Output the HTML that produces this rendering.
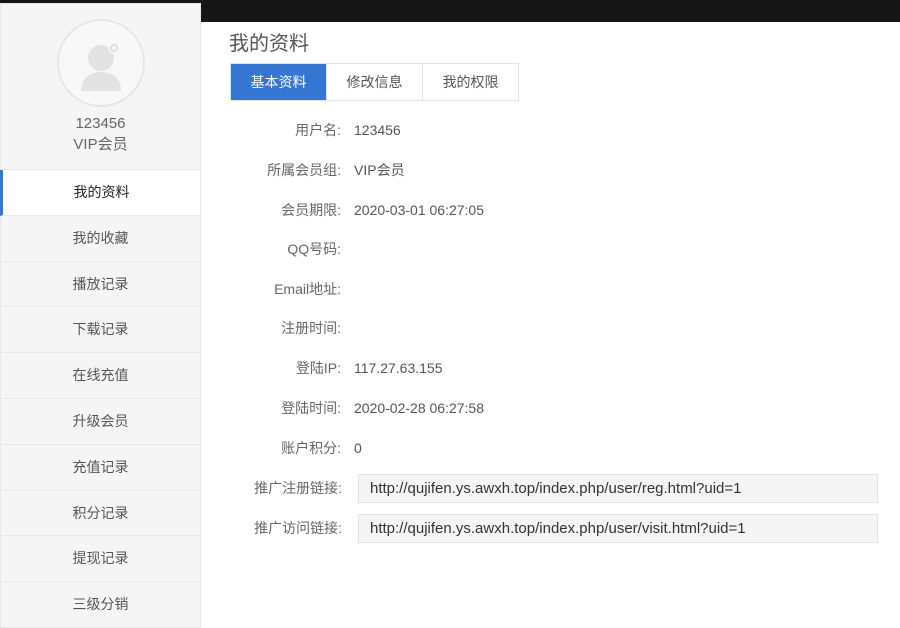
<!DOCTYPE html><html><head><meta charset="utf-8"><style>
*{margin:0;padding:0;box-sizing:border-box}
body{width:900px;height:628px;overflow:hidden;background:#fff;font-family:"Liberation Sans","Noto Sans CJK SC",sans-serif;color:#555;position:relative}
.top{position:absolute;left:0;top:0;width:900px;height:22px;background:#161616}
.side{position:absolute;left:0;top:3px;width:201px;height:625px}
.prof{height:167px;background:#f5f5f5;border:1px solid #e8e8e8;text-align:center}
.av{width:88px;height:88px;border-radius:50%;border:2px solid #e6e6e6;background:#f8f8f8;margin:15px auto 0;position:relative}
.nm{font-size:15px;color:#666;line-height:21px;margin-top:6px}
.menu div{height:45.8px;line-height:45px;text-align:center;font-size:14px;color:#555;border:1px solid #e8e8e8;border-top:none;background:#f5f5f5}
.menu div.on{background:#fff;color:#222;border-left:3px solid #3476d2}
h1{position:absolute;left:229px;top:27px;font-size:20px;font-weight:normal;color:#555}
.tabs{position:absolute;left:230px;top:63px;display:flex;border:1px solid #e2e2e2}
.tabs div{height:36px;line-height:36px;font-size:14px;text-align:center;color:#555;border-left:1px solid #e2e2e2;width:96px}
.tabs div.on{background:#3476d2;color:#fff;border:none;width:95px}
.row{position:absolute;left:200px;font-size:14px;height:20px;line-height:20px;width:700px}
.row .l{position:absolute;right:559px;color:#666;white-space:nowrap}
.row .v{position:absolute;left:154px;color:#555}
.in{position:absolute;left:358px;width:520px;height:29px;background:#f5f5f5;border:1px solid #e3e3e3;font-size:15px;color:#333;line-height:27px;padding-left:11px}
</style></head><body>
<div class="top"></div>
<div class="side"><div class="prof"><div class="av"><svg width="84" height="84" viewBox="0 0 84 84"><circle cx="42" cy="37" r="13" fill="#e2e2e2"/><path d="M22 70c0-12 8-19 20-19s20 7 20 19z" fill="#e2e2e2"/><circle cx="55" cy="27" r="5" fill="#e2e2e2" stroke="#f8f8f8" stroke-width="1.5"/><path d="M53 27h4M55 25v4" stroke="#fff" stroke-width="1.2"/></svg></div>
<div class="nm">123456<br>VIP会员</div></div>
<div class="menu"><div class="on">我的资料</div><div>我的收藏</div><div>播放记录</div><div>下载记录</div><div>在线充值</div><div>升级会员</div><div>充值记录</div><div>积分记录</div><div>提现记录</div><div>三级分销</div></div></div>
<h1>我的资料</h1>
<div class="tabs"><div class="on">基本资料</div><div>修改信息</div><div>我的权限</div></div>
<div class="row" style="top:120px"><span class="l">用户名:</span><span class="v">123456</span></div>
<div class="row" style="top:160px"><span class="l">所属会员组:</span><span class="v">VIP会员</span></div>
<div class="row" style="top:200px"><span class="l">会员期限:</span><span class="v">2020-03-01 06:27:05</span></div>
<div class="row" style="top:239px"><span class="l">QQ号码:</span></div>
<div class="row" style="top:279px"><span class="l">Email地址:</span></div>
<div class="row" style="top:318px"><span class="l">注册时间:</span></div>
<div class="row" style="top:358px"><span class="l">登陆IP:</span><span class="v">117.27.63.155</span></div>
<div class="row" style="top:398px"><span class="l">登陆时间:</span><span class="v">2020-02-28 06:27:58</span></div>
<div class="row" style="top:438px"><span class="l">账户积分:</span><span class="v">0</span></div>
<div class="row" style="top:478px"><span class="l" style="right:558px">推广注册链接:</span></div>
<div class="in" style="top:474px">http://qujifen.ys.awxh.top/index.php/user/reg.html?uid=1</div>
<div class="row" style="top:518px"><span class="l" style="right:558px">推广访问链接:</span></div>
<div class="in" style="top:514px">http://qujifen.ys.awxh.top/index.php/user/visit.html?uid=1</div>
</body></html>
